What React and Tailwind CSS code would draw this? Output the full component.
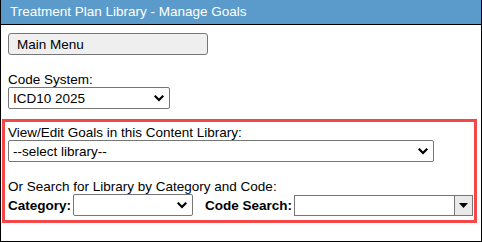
import React from "react";

const font = { fontFamily: '"Liberation Sans", Arial, sans-serif' };

function Chevron() {
  return (
    <svg width="10" height="7" viewBox="0 0 10 7" className="shrink-0">
      <polyline points="1.5,1.5 5,5 8.5,1.5" fill="none" stroke="#000" strokeWidth="2.2" strokeLinecap="square" />
    </svg>
  );
}

function Select({ className, value, chevronPad = "pr-[5px]" }) {
  return (
    <div
      className={`flex items-center justify-between bg-white border border-[#767676] rounded-[2px] pl-[4px] ${chevronPad} ${className}`}
    >
      <span className="text-[13.5px] leading-[15px] text-black whitespace-nowrap">{value}</span>
      <Chevron />
    </div>
  );
}

export default function App() {
  return (
    <div className="w-[482px] h-[242px] bg-white border-x border-b border-black flex flex-col text-black" style={font}>
      <div className="h-[25px] shrink-0 bg-[#5b9bcb] border-b border-black flex items-center pl-[9px]">
        <span className="text-white text-[13.5px] leading-[15px] mt-[-1px]">Treatment Plan Library - Manage Goals</span>
      </div>
      <div className="pl-[7px] flex flex-col">
        <div className="mt-[8px] w-[200px] h-[22px] bg-[#efefef] border border-[#767676] rounded-[3px] flex items-center pl-[8px] text-[13.5px] leading-[15px]">
          Main Menu
        </div>
        <div className="mt-[17px] text-[13.5px] leading-[15px]">Code System:</div>
        <Select className="w-[162px] h-[22px]" value="ICD10 2025" />
      </div>
      <div className="mt-[10px] ml-[1px] mr-[4px] border-[3px] border-[#f44848] pl-[3px] pt-[3px] pb-[4px] flex flex-col">
        <div className="text-[13.5px] leading-[15px]">View/Edit Goals in this Content Library:</div>
        <Select className="w-[426px] h-[22px]" value="--select library--" />
        <div className="mt-[17px] text-[13.5px] leading-[15px]">Or Search for Library by Category and Code:</div>
        <div className="flex items-center h-[22px]">
          <span className="font-bold text-[13.5px] leading-[15px] w-[65px]">Category:</span>
          <Select className="w-[120px] h-[22px]" value="" />
          <span className="font-bold text-[13.5px] leading-[15px] ml-[12px] w-[89px]">Code Search:</span>
          <div className="flex h-[21px]">
            <div className="w-[160px] h-[21px] bg-white border border-[#767676] border-r-0" />
            <div className="w-[19px] h-[21px] bg-[#e9e9e9] border border-[#767676] flex items-center justify-center">
              <svg width="9" height="5" viewBox="0 0 9 5">
                <polygon points="0,0 9,0 4.5,5" fill="#000" />
              </svg>
            </div>
          </div>
        </div>
      </div>
    </div>
  );
}
